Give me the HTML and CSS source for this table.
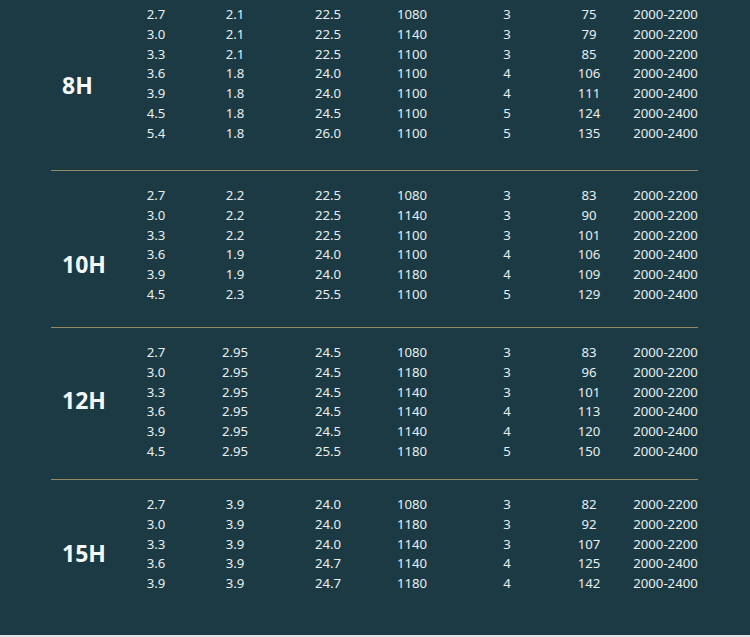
FILE: index.html
```html
<!DOCTYPE html>
<html lang="en">
<head>
<meta charset="utf-8">
<title>Spec table</title>
<link rel="stylesheet" href="styles.css">
</head>
<body>
<div class="page">
  <section class="group g1">
    <div class="label">8H</div>
    <div class="rows">
      <div class="row"><span>2.7</span><span>2.1</span><span>22.5</span><span>1080</span><span>3</span><span>75</span><span>2000-2200</span></div>
      <div class="row"><span>3.0</span><span>2.1</span><span>22.5</span><span>1140</span><span>3</span><span>79</span><span>2000-2200</span></div>
      <div class="row"><span>3.3</span><span>2.1</span><span>22.5</span><span>1100</span><span>3</span><span>85</span><span>2000-2200</span></div>
      <div class="row"><span>3.6</span><span>1.8</span><span>24.0</span><span>1100</span><span>4</span><span>106</span><span>2000-2400</span></div>
      <div class="row"><span>3.9</span><span>1.8</span><span>24.0</span><span>1100</span><span>4</span><span>111</span><span>2000-2400</span></div>
      <div class="row"><span>4.5</span><span>1.8</span><span>24.5</span><span>1100</span><span>5</span><span>124</span><span>2000-2400</span></div>
      <div class="row"><span>5.4</span><span>1.8</span><span>26.0</span><span>1100</span><span>5</span><span>135</span><span>2000-2400</span></div>
    </div>
  </section>
  <div class="sep"></div>
  <section class="group g2">
    <div class="label">10H</div>
    <div class="rows">
      <div class="row"><span>2.7</span><span>2.2</span><span>22.5</span><span>1080</span><span>3</span><span>83</span><span>2000-2200</span></div>
      <div class="row"><span>3.0</span><span>2.2</span><span>22.5</span><span>1140</span><span>3</span><span>90</span><span>2000-2200</span></div>
      <div class="row"><span>3.3</span><span>2.2</span><span>22.5</span><span>1100</span><span>3</span><span>101</span><span>2000-2200</span></div>
      <div class="row"><span>3.6</span><span>1.9</span><span>24.0</span><span>1100</span><span>4</span><span>106</span><span>2000-2400</span></div>
      <div class="row"><span>3.9</span><span>1.9</span><span>24.0</span><span>1180</span><span>4</span><span>109</span><span>2000-2400</span></div>
      <div class="row"><span>4.5</span><span>2.3</span><span>25.5</span><span>1100</span><span>5</span><span>129</span><span>2000-2400</span></div>
    </div>
  </section>
  <div class="sep"></div>
  <section class="group g3">
    <div class="label">12H</div>
    <div class="rows">
      <div class="row"><span>2.7</span><span>2.95</span><span>24.5</span><span>1080</span><span>3</span><span>83</span><span>2000-2200</span></div>
      <div class="row"><span>3.0</span><span>2.95</span><span>24.5</span><span>1180</span><span>3</span><span>96</span><span>2000-2200</span></div>
      <div class="row"><span>3.3</span><span>2.95</span><span>24.5</span><span>1140</span><span>3</span><span>101</span><span>2000-2200</span></div>
      <div class="row"><span>3.6</span><span>2.95</span><span>24.5</span><span>1140</span><span>4</span><span>113</span><span>2000-2400</span></div>
      <div class="row"><span>3.9</span><span>2.95</span><span>24.5</span><span>1140</span><span>4</span><span>120</span><span>2000-2400</span></div>
      <div class="row"><span>4.5</span><span>2.95</span><span>25.5</span><span>1180</span><span>5</span><span>150</span><span>2000-2400</span></div>
    </div>
  </section>
  <div class="sep"></div>
  <section class="group g4">
    <div class="label">15H</div>
    <div class="rows">
      <div class="row"><span>2.7</span><span>3.9</span><span>24.0</span><span>1080</span><span>3</span><span>82</span><span>2000-2200</span></div>
      <div class="row"><span>3.0</span><span>3.9</span><span>24.0</span><span>1180</span><span>3</span><span>92</span><span>2000-2200</span></div>
      <div class="row"><span>3.3</span><span>3.9</span><span>24.0</span><span>1140</span><span>3</span><span>107</span><span>2000-2200</span></div>
      <div class="row"><span>3.6</span><span>3.9</span><span>24.7</span><span>1140</span><span>4</span><span>125</span><span>2000-2400</span></div>
      <div class="row"><span>3.9</span><span>3.9</span><span>24.7</span><span>1180</span><span>4</span><span>142</span><span>2000-2400</span></div>
    </div>
  </section>
</div>
</body>
</html>
```
FILE: styles.css
```css
* { box-sizing: border-box; }
html, body { margin: 0; padding: 0; }
body {
  background: #1b3a43;
  font-family: "Noto Sans", "Open Sans", sans-serif;
  color: #e8eef0;
}
.page {
  width: 750px;
  height: 637px;
  background: #1b3a43;
  border-bottom: 2px solid #dfe4e4;
  overflow: hidden;
}
.group {
  display: flex;
  padding-left: 62px;
}
.g1 { height: 170px; padding-top: 5px; }
.g2 { height: 156px; padding-top: 15px; }
.g3 { height: 151px; padding-top: 15px; }
.g4 { padding-top: 15px; }
.label {
  width: 54px;
  flex: none;
  font-size: 23px;
  font-weight: 700;
  line-height: 24px;
  color: #f5f9f9;
}
.g1 .label { margin-top: 68px; }
.g2 .label { margin-top: 66px; }
.g3 .label { margin-top: 45px; }
.g4 .label { margin-top: 46px; }
.rows {
  display: flex;
  flex-direction: column;
}
.row {
  display: grid;
  grid-template-columns: 80px 78px 108px 60px 130px 34px 119px;
  height: 19.8px;
  align-items: center;
  font-size: 13.2px;
  line-height: 19.8px;
  text-align: center;
  white-space: nowrap;
}
.sep {
  height: 1px;
  margin-left: 51px;
  width: 647px;
  background: #978a66;
}
```
